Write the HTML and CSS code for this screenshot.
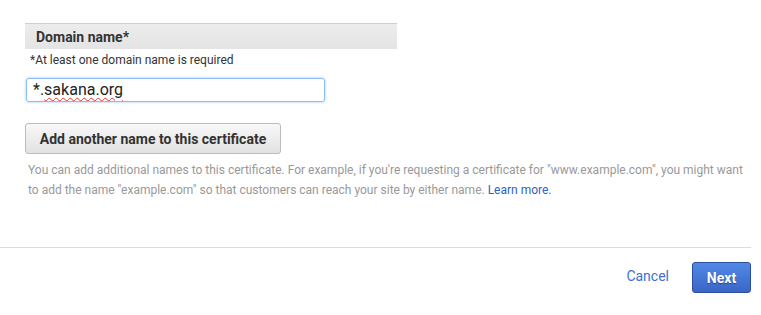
FILE: index.html
```html
<!DOCTYPE html>
<html lang="en">
<head>
  <meta charset="UTF-8">
  <title>Request a certificate</title>
  <link rel="stylesheet" href="styles.css">
</head>
<body>
  <div class="page">
    <div class="domain-section">
      <div class="section-header">Domain name*</div>
      <div class="hint">*At least one domain name is required</div>
      <div class="input-row">
        <div class="text-input">*.<span class="misspelled">sakana.org</span></div>
      </div>
      <button class="add-button">Add another name to this certificate</button>
      <p class="help-text">
        You can add additional names to this certificate. For example, if you're requesting a certificate for "www.example.com", you might want
        to add the name "example.com" so that customers can reach your site by either name. <a href="#" class="link">Learn more.</a>
      </p>
    </div>

    <div class="footer">
      <a href="#" class="cancel">Cancel</a>
      <button class="next-button">Next</button>
    </div>
  </div>
</body>
</html>
```

FILE: styles.css
```css
body {
  margin: 0;
  padding: 0;
  font-family: Roboto, "Liberation Sans", Arial, sans-serif;
  background: #fff;
  color: #333;
}

.page {
  width: 761px;
}

.domain-section {
  padding: 23px 0 0 25px;
  height: 247px;
  box-sizing: border-box;
}

.section-header {
  width: 372px;
  height: 26px;
  box-sizing: border-box;
  border-top: 1px solid #cfcfcf;
  background: linear-gradient(#ececec, #e4e4e4);
  padding: 5px 0 0 11px;
  font-size: 14px;
  font-weight: 700;
  color: #333;
}

.hint {
  margin-top: 3px;
  padding-left: 5px;
  font-size: 12px;
  line-height: 16px;
  color: #333;
}

.input-row {
  margin-top: 10px;
  padding-left: 1px;
}

.text-input {
  width: 299px;
  height: 24px;
  box-sizing: border-box;
  border: 1px solid #8dbdf0;
  border-radius: 3px;
  box-shadow: 0 0 3px rgba(90, 160, 240, 0.6);
  padding: 0 0 0 6px;
  font-size: 16px;
  line-height: 21px;
  color: #222;
}

.misspelled {
  text-decoration: underline wavy #e33;
  text-decoration-thickness: 1px;
  text-underline-offset: 2px;
}

.add-button {
  display: block;
  margin-top: 21px;
  width: 256px;
  height: 31px;
  border: 1px solid #bcbcbc;
  border-radius: 3px;
  background: linear-gradient(#f8f8f8, #e2e2e2);
  font-family: inherit;
  font-size: 14px;
  font-weight: 700;
  color: #333;
  cursor: pointer;
}

.help-text {
  margin: 6px 0 0 3px;
  width: 725px;
  font-size: 12px;
  line-height: 20px;
  color: #999;
}

.link {
  color: #2f5fc9;
  text-decoration: none;
}

.footer {
  border-top: 1px solid #dcdcdc;
  width: 751px;
  height: 68px;
  box-sizing: border-box;
  display: flex;
  align-items: flex-start;
  justify-content: flex-end;
  gap: 23px;
  padding-top: 14px;
}

.cancel {
  margin-top: 6px;
  font-size: 14px;
  color: #3d6fd2;
  text-decoration: none;
}

.next-button {
  width: 59px;
  height: 31px;
  border: 1px solid #2c4e9e;
  border-radius: 3px;
  background: linear-gradient(#5188e6, #3a66c6);
  color: #fff;
  font-family: inherit;
  font-size: 14px;
  font-weight: 700;
  text-shadow: 0 1px 1px rgba(0, 0, 0, 0.4);
  cursor: pointer;
}
```
